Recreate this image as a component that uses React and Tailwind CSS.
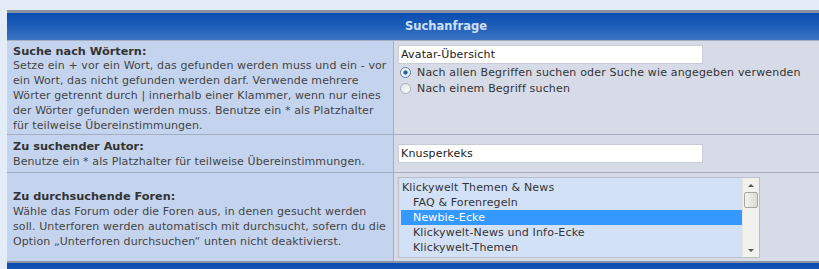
import { useState } from 'react';

const forums = [
    { name: 'Klickywelt Themen & News', level: 0 },
    { name: 'FAQ & Forenregeln', level: 1 },
    { name: 'Newbie-Ecke', level: 1 },
    { name: 'Klickywelt-News und Info-Ecke', level: 1 },
    { name: 'Klickywelt-Themen', level: 1 },
];

function Radio({ checked }) {
    return (
        <span className={`inline-block w-[11px] h-[11px] rounded-full border shrink-0 ${checked ? 'border-[#5d7fa8] bg-[radial-gradient(circle,#1d4f86_0,#2f6fb0_28%,#e8eef6_40%,#ffffff_100%)]' : 'border-[#a9b0ba] bg-[linear-gradient(135deg,#dfe3e8,#ffffff)]'}`} />
    );
}

export default function App() {
    const [selected] = useState('Newbie-Ecke');

    return (
        <div className="w-[819px] h-[269px] overflow-hidden bg-[#e4ecf8] pt-[10px] pl-[7px] font-['DejaVu_Sans',Verdana,sans-serif] text-[#333]">
            <div className="w-[878px] border-t-[3px] border-[#8a93a6]">
                {/* Header */}
                <div className="h-[28px] flex items-center justify-center bg-[linear-gradient(to_bottom,#0a4db0,#1a5bb8_40%,#3b74c2)] border-b border-[#a5aec0]">
                    <span className="text-[11.5px] font-bold text-[#cfe0f7]">Suchanfrage</span>
                </div>

                {/* Row 1 */}
                <div className="flex border-b border-[#a5aec0]">
                    <div className="w-[387px] shrink-0 bg-[#c4d4ee] border-r border-[#a5aec0] px-[6px] pt-[4px] pb-[4px] h-[93px]">
                        <div className="text-[11.3px] font-bold leading-[12px] pt-[1px] text-[#333]">Suche nach Wörtern:</div>
                        <div className="text-[11px] tracking-[0.1px] leading-[15px] text-[#444]">
                            Setze ein + vor ein Wort, das gefunden werden muss und ein - vor ein Wort, das nicht gefunden werden darf. Verwende mehrere Wörter getrennt durch | innerhalb einer Klammer, wenn nur eines der Wörter gefunden werden muss. Benutze ein * als Platzhalter für teilweise Übereinstimmungen.
                        </div>
                    </div>
                    <div className="flex-1 bg-[#d6dbe7] pl-[4px] pt-[4px] text-[11px] tracking-[0.17px]">
                        <div className="w-[305px] h-[19px] bg-white border border-[#c8ccd4] px-[2px] leading-[17px] text-[#222]">Avatar-Übersicht</div>
                        <div className="flex items-center gap-[6px] mt-[1px] pl-[2px] leading-[15px] text-[#333]">
                            <Radio checked />
                            <span>Nach allen Begriffen suchen oder Suche wie angegeben verwenden</span>
                        </div>
                        <div className="flex items-center gap-[6px] mt-[1px] pl-[2px] leading-[15px] text-[#333]">
                            <Radio />
                            <span>Nach einem Begriff suchen</span>
                        </div>
                    </div>
                </div>

                {/* Row 2 */}
                <div className="flex border-b border-[#a5aec0]">
                    <div className="w-[387px] shrink-0 bg-[#c4d4ee] border-r border-[#a5aec0] px-[6px] pt-[4px] h-[37px]">
                        <div className="text-[11.3px] font-bold leading-[15px]">Zu suchender Autor:</div>
                        <div className="text-[11px] tracking-[0.1px] leading-[15px] text-[#444]">Benutze ein * als Platzhalter für teilweise Übereinstimmungen.</div>
                    </div>
                    <div className="flex-1 bg-[#d6dbe7] pl-[4px] flex items-center text-[11px] tracking-[0.17px]">
                        <div className="w-[305px] h-[19px] bg-white border border-[#c8ccd4] px-[2px] leading-[17px] text-[#222]">Knusperkeks</div>
                    </div>
                </div>

                {/* Row 3 */}
                <div className="flex border-b-[2px] border-[#8a93a6]">
                    <div className="w-[387px] shrink-0 bg-[#c4d4ee] border-r border-[#a5aec0] px-[6px] h-[88px] flex flex-col justify-center pt-[4px]">
                        <div className="text-[11.3px] font-bold leading-[15px]">Zu durchsuchende Foren:</div>
                        <div className="text-[11px] tracking-[0.1px] leading-[15px] text-[#444]">
                            Wähle das Forum oder die Foren aus, in denen gesucht werden soll. Unterforen werden automatisch mit durchsucht, sofern du die Option „Unterforen durchsuchen“ unten nicht deaktivierst.
                        </div>
                    </div>
                    <div className="flex-1 bg-[#d6dbe7] pl-[4px] pt-[4px]">
                        <div className="w-[362px] h-[81px] flex border border-[#b9bfc9] bg-[#d3e1f7]">
                            <div className="flex-1 pt-[2px] pl-[2px] text-[11px] tracking-[0.15px] leading-[15px] text-[#333]">
                                {forums.map(f => (
                                    <div
                                        key={f.name}
                                        className={`${f.level ? 'pl-[12px]' : 'pl-[1px]'} ${f.name === selected ? 'bg-[#3399ff] text-white' : ''}`}
                                    >
                                        {f.name}
                                    </div>
                                ))}
                            </div>
                            <div className="w-[17px] bg-[#f1f1ee] border-l border-[#e4e4e0] flex flex-col items-center justify-between py-[3px]">
                                <div className="flex flex-col items-center">
                                    <span className="w-0 h-0 border-l-[3px] border-r-[3px] border-b-[3px] border-l-transparent border-r-transparent border-b-[#555] mt-[3px]" />
                                    <div className="w-[14px] h-[16px] mt-[5px] rounded-[2px] border border-[#a8a8a0] bg-[linear-gradient(to_right,#f4f4f0,#dcdcd6)]" />
                                </div>
                                <span className="w-0 h-0 border-l-[3px] border-r-[3px] border-t-[3px] border-l-transparent border-r-transparent border-t-[#555] mb-[2px]" />
                            </div>
                        </div>
                    </div>
                </div>

                {/* Footer */}
                <div className="h-[10px] bg-[linear-gradient(to_bottom,#0a4db0,#1a5bb8)]" />
            </div>
        </div>
    );
}
